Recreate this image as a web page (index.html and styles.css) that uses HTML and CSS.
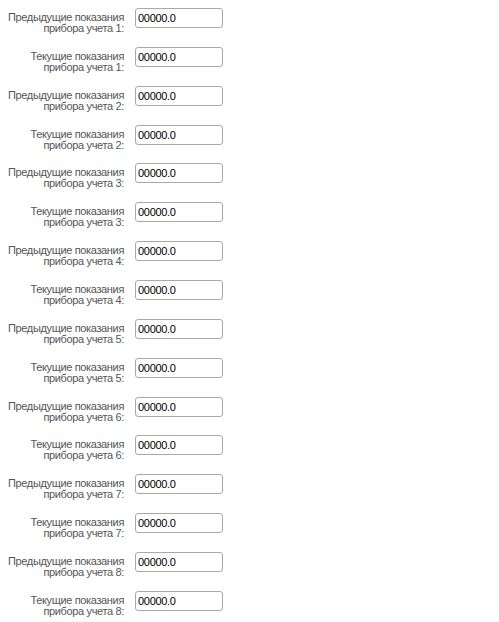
FILE: index.html
```html
<!DOCTYPE html>
<html lang="ru">
<head>
    <meta charset="UTF-8">
    <title>Показания приборов учета</title>
    <link rel="stylesheet" href="styles.css">
</head>
<body>
    <form class="readings">
        <div class="row"><label class="caption">Предыдущие показания прибора учета 1:</label><input class="value" type="text" value="00000.0"></div>
        <div class="row"><label class="caption">Текущие показания прибора учета 1:</label><input class="value" type="text" value="00000.0"></div>
        <div class="row"><label class="caption">Предыдущие показания прибора учета 2:</label><input class="value" type="text" value="00000.0"></div>
        <div class="row"><label class="caption">Текущие показания прибора учета 2:</label><input class="value" type="text" value="00000.0"></div>
        <div class="row"><label class="caption">Предыдущие показания прибора учета 3:</label><input class="value" type="text" value="00000.0"></div>
        <div class="row"><label class="caption">Текущие показания прибора учета 3:</label><input class="value" type="text" value="00000.0"></div>
        <div class="row"><label class="caption">Предыдущие показания прибора учета 4:</label><input class="value" type="text" value="00000.0"></div>
        <div class="row"><label class="caption">Текущие показания прибора учета 4:</label><input class="value" type="text" value="00000.0"></div>
        <div class="row"><label class="caption">Предыдущие показания прибора учета 5:</label><input class="value" type="text" value="00000.0"></div>
        <div class="row"><label class="caption">Текущие показания прибора учета 5:</label><input class="value" type="text" value="00000.0"></div>
        <div class="row"><label class="caption">Предыдущие показания прибора учета 6:</label><input class="value" type="text" value="00000.0"></div>
        <div class="row"><label class="caption">Текущие показания прибора учета 6:</label><input class="value" type="text" value="00000.0"></div>
        <div class="row"><label class="caption">Предыдущие показания прибора учета 7:</label><input class="value" type="text" value="00000.0"></div>
        <div class="row"><label class="caption">Текущие показания прибора учета 7:</label><input class="value" type="text" value="00000.0"></div>
        <div class="row"><label class="caption">Предыдущие показания прибора учета 8:</label><input class="value" type="text" value="00000.0"></div>
        <div class="row"><label class="caption">Текущие показания прибора учета 8:</label><input class="value" type="text" value="00000.0"></div>
    </form>
</body>
</html>
```

FILE: styles.css
```css
body {
    margin: 0;
    background: #ffffff;
    font-family: "Liberation Sans", Arial, sans-serif;
}

.readings {
    padding-top: 8px;
}

/* one meter reading: caption on the left, field on the right */
.row {
    display: flex;
    align-items: flex-start;
    height: 38.87px;
}

.caption {
    width: 124px;
    padding-top: 4px;
    text-align: right;
    font-size: 11px;
    line-height: 11px;
    letter-spacing: -0.35px;
    color: #555555;
}

.value {
    box-sizing: border-box;
    width: 88px;
    height: 20px;
    margin: 0 0 0 11px;
    padding: 0 2px;
    border: 1px solid #a9a9a9;
    border-radius: 3px;
    font-family: "Liberation Sans", Arial, sans-serif;
    font-size: 11px;
    letter-spacing: -0.3px;
    color: #000000;
}
```
